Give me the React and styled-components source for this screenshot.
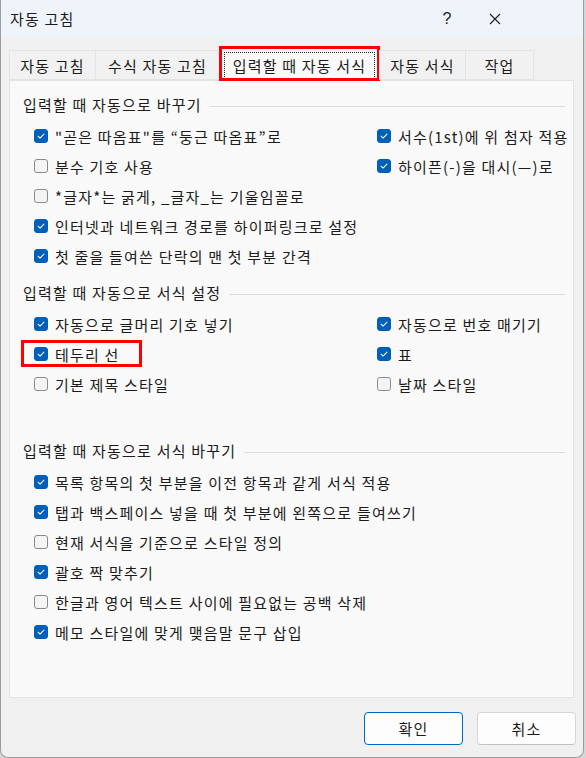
import styled, { createGlobalStyle } from 'styled-components';

const GlobalStyle = createGlobalStyle`
  body {
    margin: 0;
    background: #d6d6d6;
    font-family: 'Noto Sans CJK KR', 'Noto Sans', sans-serif;
  }
`;

const tabs = [
  { label: '자동 고침', width: 87 },
  { label: '수식 자동 고침', width: 125 },
  { label: '입력할 때 자동 서식', width: 161, active: true },
  { label: '자동 서식', width: 87 },
  { label: '작업', width: 69 },
];

const sections = [
  {
    title: '입력할 때 자동으로 바꾸기',
    gap: 14,
    rows: [
      [{ label: '"곧은 따옴표"를 “둥근 따옴표”로', on: true }, { label: '서수(1st)에 위 첨자 적용', on: true }],
      [{ label: '분수 기호 사용' }, { label: '하이픈(-)을 대시(—)로', on: true }],
      [{ label: '*글자*는 굵게, _글자_는 기울임꼴로' }],
      [{ label: '인터넷과 네트워크 경로를 하이퍼링크로 설정', on: true }],
      [{ label: '첫 줄을 들여쓴 단락의 맨 첫 부분 간격', on: true }],
    ],
  },
  {
    title: '입력할 때 자동으로 서식 설정',
    gap: 12,
    rows: [
      [{ label: '자동으로 글머리 기호 넣기', on: true }, { label: '자동으로 번호 매기기', on: true }],
      [{ label: '테두리 선', on: true, marked: true }, { label: '표', on: true }],
      [{ label: '기본 제목 스타일' }, { label: '날짜 스타일' }],
    ],
  },
  {
    title: '입력할 때 자동으로 서식 바꾸기',
    gap: 42,
    rows: [
      [{ label: '목록 항목의 첫 부분을 이전 항목과 같게 서식 적용', on: true }],
      [{ label: '탭과 백스페이스 넣을 때 첫 부분에 왼쪽으로 들여쓰기', on: true }],
      [{ label: '현재 서식을 기준으로 스타일 정의' }],
      [{ label: '괄호 짝 맞추기', on: true }],
      [{ label: '한글과 영어 텍스트 사이에 필요없는 공백 삭제' }],
      [{ label: '메모 스타일에 맞게 맺음말 문구 삽입', on: true }],
    ],
  },
];

function Check({ on }) {
  return (
    <Box $on={on}>
      {on && (
        <svg width="14" height="14" viewBox="0 0 14 14">
          <path d="M3.6 7.2 L5.9 9.4 L10.4 4.8" fill="none" stroke="#fff" strokeWidth="1.2" strokeLinecap="round" strokeLinejoin="round" />
        </svg>
      )}
    </Box>
  );
}

function Option({ item, wide }) {
  return (
    <OptionLabel $wide={wide} $marked={item.marked}>
      <Check on={item.on} />
      <span>{item.label}</span>
    </OptionLabel>
  );
}

export default function App() {
  return (
    <>
      <GlobalStyle />
      <Window>
        <TitleBar>
          <Title>자동 고침</Title>
          <TitleButton>?</TitleButton>
          <TitleButton>
            <svg width="12" height="12" viewBox="0 0 12 12">
              <path d="M1 1 L11 11 M11 1 L1 11" stroke="#1b1b1b" strokeWidth="1.1" />
            </svg>
          </TitleButton>
        </TitleBar>

        <TabStrip>
          {tabs.map((t) => (
            <Tab key={t.label} $width={t.width} $active={t.active}>
              {t.label}
            </Tab>
          ))}
        </TabStrip>

        <Panel>
          {sections.map((s) => (
            <Section key={s.title} $gap={s.gap}>
              <Heading>
                <span>{s.title}</span>
                <Rule />
              </Heading>
              <Rows>
                {s.rows.map((row, i) => (
                  <Row key={i}>
                    <Option item={row[0]} wide={row.length > 1} />
                    {row[1] && <Option item={row[1]} />}
                  </Row>
                ))}
              </Rows>
            </Section>
          ))}
        </Panel>

        <Footer>
          <Button $primary>확인</Button>
          <Button>취소</Button>
        </Footer>
      </Window>
    </>
  );
}

const Window = styled.div`
  box-sizing: border-box;
  width: 584px;
  height: 758px;
  background: #f0f0f0;
  border: 1px solid #9c9c9c;
  border-top: none;
  border-radius: 0 0 8px 8px;
  display: flex;
  flex-direction: column;
  color: #1b1b1b;
  font-size: 15px;
  letter-spacing: 1.2px;
  overflow: hidden;
`;

const TitleBar = styled.div`
  height: 37px;
  background: #eef4f9;
  display: flex;
  align-items: center;
  padding: 0 64px 0 9px;
`;

const Title = styled.div`
  flex: 1;
  font-size: 15px;
  line-height: 20px;
`;

const TitleButton = styled.div`
  width: 48px;
  height: 37px;
  display: flex;
  align-items: center;
  justify-content: center;
  font-family: 'Liberation Sans', sans-serif;
  font-size: 16px;
  letter-spacing: 0;
`;

const TabStrip = styled.div`
  display: flex;
  align-items: flex-end;
  height: 34px;
  margin: 9px 0 0 9px;
  position: relative;
  z-index: 1;
`;

const Tab = styled.div`
  box-sizing: border-box;
  width: ${(p) => p.$width}px;
  height: ${(p) => (p.$active ? 35 : 30)}px;
  margin-bottom: ${(p) => (p.$active ? -1 : 0)}px;
  display: flex;
  align-items: center;
  justify-content: center;
  white-space: nowrap;
  background: ${(p) => (p.$active ? '#f9f9f9' : '#f1f1f1')};
  border: 1px solid #e3e3e3;
  border-bottom: ${(p) => (p.$active ? 'none' : '1px solid #e3e3e3')};
  margin-left: -1px;
  position: relative;
  padding-top: ${(p) => (p.$active ? 2 : 0)}px;

  &::before {
    content: ${(p) => (p.$active ? "''" : 'none')};
    position: absolute;
    inset: 5px 4px 2px 4px;
    border: 1px dotted #222;
  }

  &::after {
    content: ${(p) => (p.$active ? "''" : 'none')};
    position: absolute;
    inset: -1px -1px 0 -1px;
    border: 3px solid #f00;
  }
`;

const Panel = styled.div`
  box-sizing: border-box;
  height: 618px;
  margin: 0 9px 0 8px;
  background: #f9f9f9;
  border: 1px solid #e3e3e3;
  padding: 0 8px 0 13px;
`;

const Section = styled.div`
  margin-top: ${(p) => p.$gap}px;
`;

const Heading = styled.div`
  display: flex;
  align-items: center;
  gap: 8px;
  height: 20px;
  line-height: 20px;
  white-space: nowrap;
`;

const Rule = styled.div`
  flex: 1;
  height: 1px;
  background: #dcdcdc;
  margin-top: 2px;
`;

const Rows = styled.div`
  margin-top: 6px;
  padding-left: 11px;
`;

const Row = styled.div`
  display: flex;
  align-items: center;
  height: 30px;
`;

const OptionLabel = styled.label`
  flex: none;
  display: flex;
  align-items: center;
  gap: 7px;
  height: 26px;
  white-space: nowrap;
  width: ${(p) => (p.$wide ? '343px' : 'auto')};
  position: relative;

  &::after {
    content: ${(p) => (p.$marked ? "''" : 'none')};
    position: absolute;
    left: -13px;
    top: -1px;
    width: 121px;
    height: 27px;
    box-sizing: border-box;
    border: 3px solid #f00;
  }
`;

const Box = styled.span`
  box-sizing: border-box;
  width: 14px;
  height: 14px;
  border-radius: 3px;
  flex: none;
  display: flex;
  align-items: center;
  justify-content: center;
  background: ${(p) => (p.$on ? '#005fb8' : '#f4f4f4')};
  border: 1px solid ${(p) => (p.$on ? '#005fb8' : '#8b8b8b')};
`;

const Footer = styled.div`
  display: flex;
  justify-content: flex-end;
  gap: 14px;
  padding: 14px 7px 0 0;
`;

const Button = styled.div`
  box-sizing: border-box;
  width: 99px;
  height: 33px;
  display: flex;
  align-items: center;
  justify-content: center;
  background: #fdfdfd;
  border-radius: 4px;
  border: 1px solid ${(p) => (p.$primary ? '#0067c0' : '#d5d5d5')};
  border-bottom-color: ${(p) => (p.$primary ? '#0067c0' : '#c2c2c2')};
`;
